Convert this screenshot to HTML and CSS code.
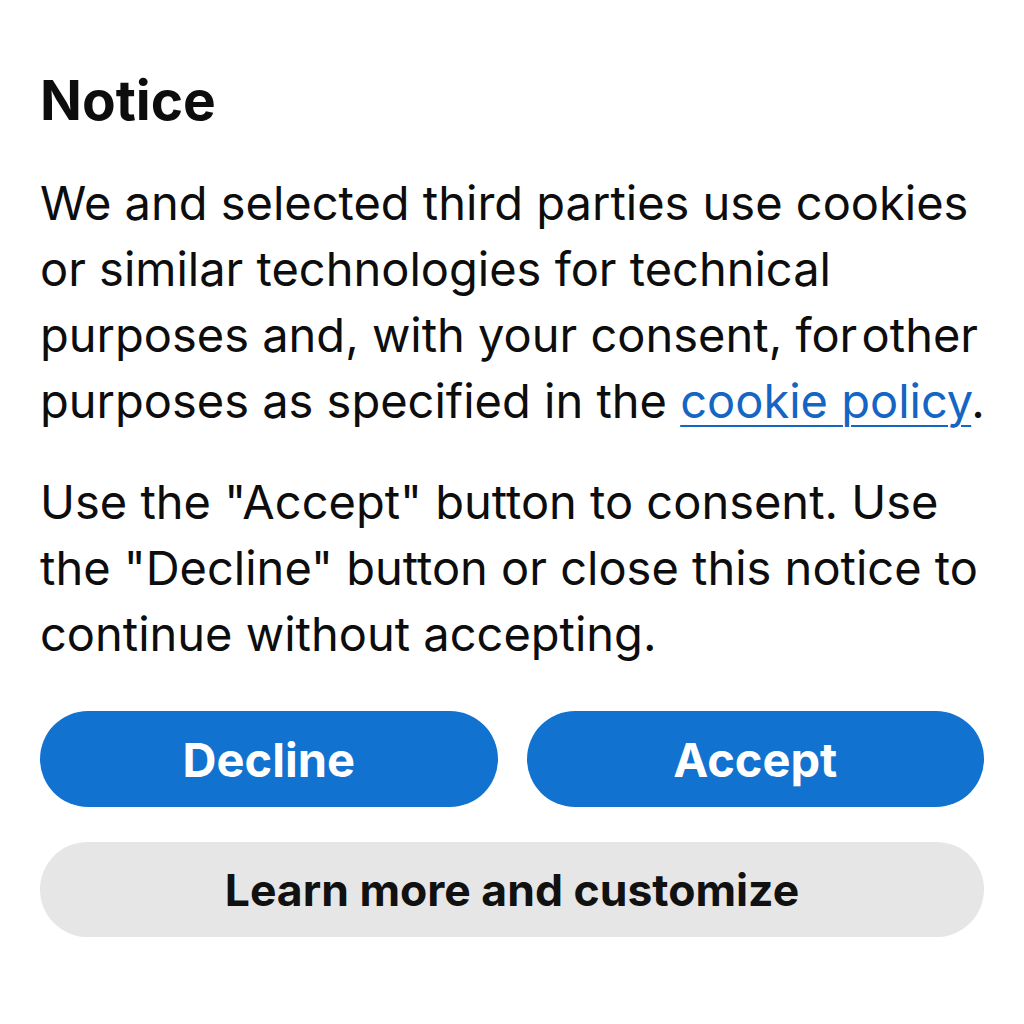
FILE: index.html
```html
<!DOCTYPE html>
<html lang="en">
<head>
<meta charset="utf-8">
<title>Notice</title>
<link rel="stylesheet" href="styles.css">
</head>
<body>
<main class="notice">
  <h1 class="notice-title">Notice</h1>
  <p class="notice-text">We and selected third parties use cookies<br>or similar technologies for technical<br>purposes and, with your consent, for&#8202;other<br>purposes as specified in the <a class="notice-link" href="#">cookie policy</a>.</p>
  <p class="notice-text">Use the "Accept" button to consent. Use<br>the "Decline" button or close this notice to<br>continue without accepting.</p>
  <div class="actions">
    <div class="actions-row">
      <button class="btn btn-primary" type="button">Decline</button>
      <button class="btn btn-primary" type="button">Accept</button>
    </div>
    <button class="btn btn-secondary" type="button">Learn more and customize</button>
  </div>
</main>
</body>
</html>
```
FILE: styles.css
```css
html, body {
  margin: 0;
  padding: 0;
  background: #ffffff;
}
body {
  font-family: Inter, "Noto Sans", "Liberation Sans", sans-serif;
  color: #0d0d0d;
}
.notice {
  width: 944px;
  padding: 68px 40px 0 40px;
}
.notice-title {
  margin: 0;
  font-size: 55px;
  line-height: 64px;
  font-weight: 700;
}
.notice-text {
  margin: 38px -40px 0 0;
  font-size: 47px;
  line-height: 66px;
  font-weight: 400;
  white-space: nowrap;
}
.notice-text + .notice-text {
  margin-top: 35px;
}
.notice-link {
  color: #1565c5;
  text-decoration: underline;
  text-decoration-thickness: 2px;
  text-underline-offset: 7px;
}
.actions {
  display: flex;
  flex-direction: column;
  gap: 35px;
  margin-top: 44px;
}
.actions-row {
  display: flex;
  gap: 29px;
}
.btn {
  border: none;
  border-radius: 48px;
  height: 96px;
  font-family: inherit;
  font-weight: 700;
  padding: 0;
  cursor: pointer;
}
.actions-row .btn {
  flex: 1;
}
.btn-primary {
  background: #1172d0;
  color: #ffffff;
  font-size: 47px;
}
.btn-secondary {
  background: #e6e6e6;
  color: #111111;
  height: 95px;
  font-size: 44.5px;
}
```
